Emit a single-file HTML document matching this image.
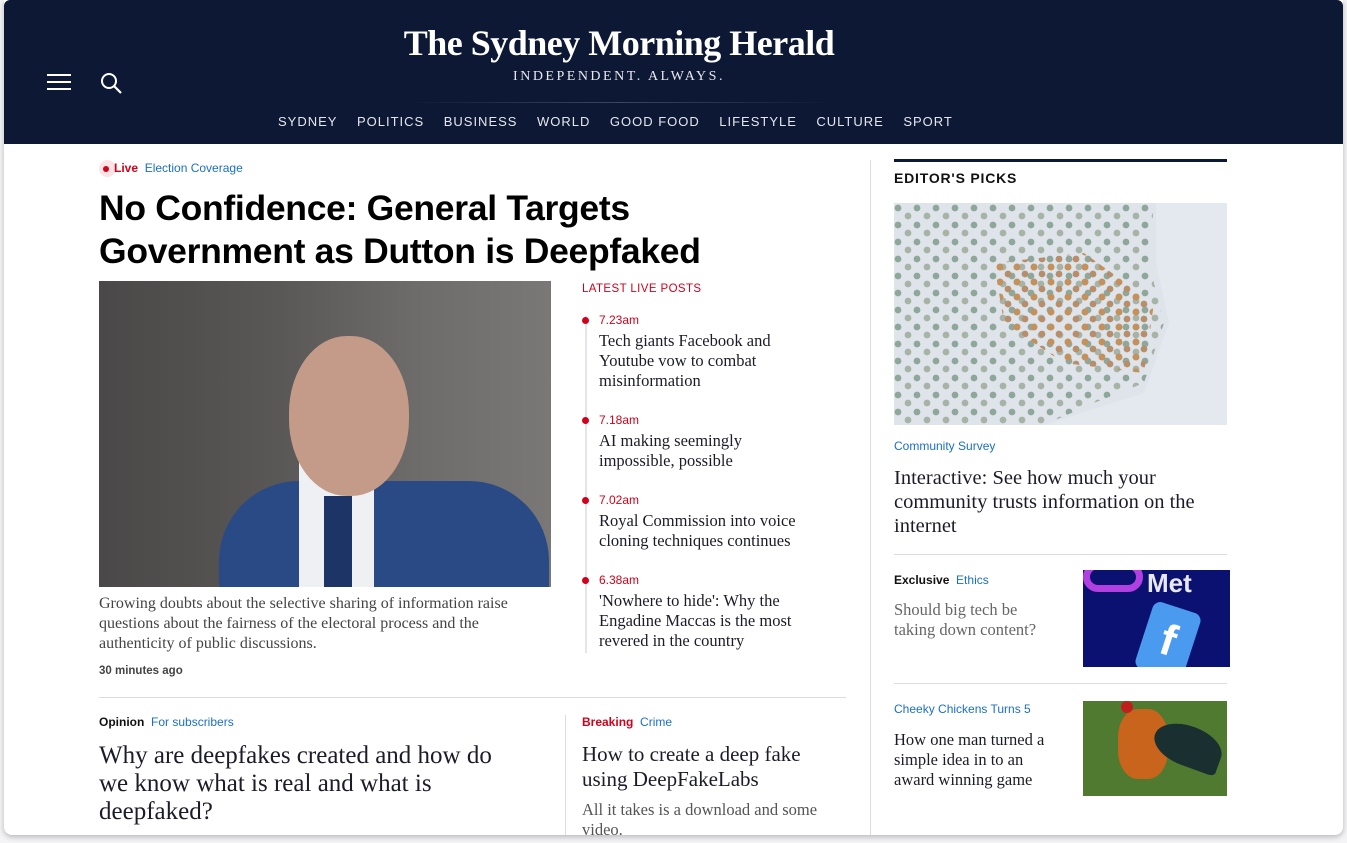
<!DOCTYPE html>
<html><head><meta charset="utf-8"><style>
*{margin:0;padding:0;box-sizing:border-box}
body{width:1347px;height:843px;background:#f4f4f6;position:relative;overflow:hidden;font-family:"Liberation Sans",sans-serif}
.card{position:absolute;left:4px;top:0;width:1339px;height:835px;background:#fff;border-radius:0 0 8px 8px;box-shadow:0 2px 6px rgba(0,0,0,.25);overflow:hidden}
.hdr{position:absolute;left:0;top:0;width:1339px;height:144px;background:#0d1934;border-radius:6px 6px 0 0}
.a{position:absolute}
.logo{top:22px;color:#fff;font-family:"Liberation Serif",serif;font-weight:bold;font-size:36px;text-align:center;letter-spacing:-0.5px}
.tag{top:69px;text-align:center;color:#e8e8ee;font-family:"Liberation Serif",serif;font-size:14px;letter-spacing:2.5px}
.nav{top:114px;left:274px;color:#e4e6ee;font-size:13px;letter-spacing:1px}
.nav span{margin-right:19.5px}
.serif{font-family:"Liberation Serif",serif;color:#1c1c28}
.red{color:#d0021b}.blue{color:#1a6fc9}
.small{font-size:12px}
.time{font-size:12px;color:#d0021b}
.dot{position:absolute;width:7px;height:7px;border-radius:50%;background:#d0021b;left:-4px}
.lp{margin-left:13px;margin-top:4px;font-size:16.5px;line-height:20px}
</style></head><body>
<div class="card">
<div class="hdr">
 <div class="a logo" style="left:200px;width:830px">The Sydney Morning Herald</div>
 <div class="a tag" style="left:200px;width:830px">INDEPENDENT. ALWAYS.</div>
 <div class="a" style="left:400px;top:102px;width:430px;height:1px;background:linear-gradient(90deg,transparent,#3a4666,transparent)"></div>
 <svg class="a" style="left:42px;top:72px" width="26" height="22"><path d="M1 3h24M1 10h24M1 17h24" stroke="#fff" stroke-width="2"/></svg>
 <svg class="a" style="left:95px;top:71px" width="26" height="26"><circle cx="10" cy="10" r="7" stroke="#fff" stroke-width="2" fill="none"/><path d="M15 15l7 7" stroke="#fff" stroke-width="2.2"/></svg>
 <div class="a nav"><span>SYDNEY</span><span>POLITICS</span><span>BUSINESS</span><span>WORLD</span><span>GOOD FOOD</span><span>LIFESTYLE</span><span>CULTURE</span><span>SPORT</span></div>
</div>

<div class="a" style="left:95px;top:160px;width:17px;height:17px;border-radius:50%;background:#fbe3e6"></div>
<div class="a" style="left:99px;top:166px;width:6px;height:6px;border-radius:50%;background:#d0021b"></div>
<div class="a small" style="left:110px;top:161px"><b class="red">Live</b> <span class="blue">&nbsp;Election Coverage</span></div>
<div class="a" style="left:95px;top:187px;font-size:35.5px;font-weight:bold;line-height:43px;color:#000;letter-spacing:-0.3px;white-space:nowrap">No Confidence: General Targets<br>Government as Dutton is Deepfaked</div>

<div class="a" style="left:95px;top:281px;width:452px;height:306px;background:linear-gradient(90deg,#4a4848,#5a5856 40%,#6e6c6a 70%,#7a7876);overflow:hidden">
 <div class="a" style="left:120px;top:200px;width:330px;height:130px;background:#2a4a86;border-radius:80px 80px 0 0"></div>
 <div class="a" style="left:200px;top:175px;width:75px;height:131px;background:#eef0f4"></div>
 <div class="a" style="left:225px;top:215px;width:28px;height:91px;background:#1c3466"></div>
 <div class="a" style="left:190px;top:55px;width:120px;height:160px;border-radius:48%;background:#c49a88"></div>
</div>
<div class="a serif" style="left:95px;top:594px;width:448px;font-size:16px;line-height:20px;color:#444">Growing doubts about the selective sharing of information raise questions about the fairness of the electoral process and the authenticity of public discussions.</div>
<div class="a" style="left:95px;top:665px;font-size:11.5px;font-weight:bold;color:#444">30 minutes ago</div>

<div class="a" style="left:578px;top:283px;font-size:11.5px;color:#d0021b;letter-spacing:.4px">LATEST LIVE POSTS</div>
<div class="a" style="left:581px;top:316px;width:2px;height:337px;background:#e4e4ea"></div>
<div class="a" style="left:582px;top:313px;width:210px">
 <div class="dot" style="top:4px"></div><div class="time" style="margin-left:13px">7.23am</div>
 <div class="serif lp">Tech giants Facebook and Youtube vow to combat misinformation</div>
</div>
<div class="a" style="left:582px;top:413px;width:210px">
 <div class="dot" style="top:4px"></div><div class="time" style="margin-left:13px">7.18am</div>
 <div class="serif lp">AI making seemingly impossible, possible</div>
</div>
<div class="a" style="left:582px;top:493px;width:240px">
 <div class="dot" style="top:4px"></div><div class="time" style="margin-left:13px">7.02am</div>
 <div class="serif lp">Royal Commission into voice cloning techniques continues</div>
</div>
<div class="a" style="left:582px;top:573px;width:240px">
 <div class="dot" style="top:4px"></div><div class="time" style="margin-left:13px">6.38am</div>
 <div class="serif lp">'Nowhere to hide': Why the Engadine Maccas is the most revered in the country</div>
</div>

<div class="a" style="left:95px;top:697px;width:747px;height:1px;background:#ddd"></div>
<div class="a" style="left:561px;top:715px;width:1px;height:125px;background:#ddd"></div>
<div class="a small" style="left:95px;top:715px"><b style="color:#111">Opinion</b> <span class="blue">&nbsp;For subscribers</span></div>
<div class="a serif" style="left:95px;top:742px;width:425px;font-size:25px;line-height:28px">Why are deepfakes created and how do we know what is real and what is deepfaked?</div>
<div class="a small" style="left:578px;top:715px"><b class="red">Breaking</b> <span class="blue">&nbsp;Crime</span></div>
<div class="a serif" style="left:578px;top:742px;width:240px;font-size:21px;line-height:25px">How to create a deep fake using DeepFakeLabs</div>
<div class="a serif" style="left:578px;top:800px;width:260px;font-size:16.5px;line-height:20px;color:#555">All it takes is a download and some video.</div>

<div class="a" style="left:866px;top:160px;width:1px;height:675px;background:#ddd"></div>
<div class="a" style="left:890px;top:159px;width:333px;height:3px;background:#0d1934"></div>
<div class="a" style="left:890px;top:170px;font-size:14px;font-weight:bold;color:#111;letter-spacing:.8px">EDITOR'S PICKS</div>
<div class="a" style="left:890px;top:203px;width:333px;height:222px;background:#dfe4ea;overflow:hidden">
 <svg width="333" height="222"><defs><pattern id="p" width="19" height="17" patternUnits="userSpaceOnUse"><circle cx="4" cy="5" r="3.4" fill="#8fa79a"/><circle cx="14" cy="13" r="3.4" fill="#a7b3a6"/></pattern><pattern id="q" width="17" height="15" patternUnits="userSpaceOnUse"><circle cx="4" cy="4" r="3.5" fill="#c4915c"/><circle cx="12" cy="11" r="3.4" fill="#b88e6a"/></pattern></defs>
 <path d="M0 0H260L255 60 270 120 250 180 200 200 150 222H0Z" fill="url(#p)"/>
 <path d="M100 60 190 50 260 100 250 170 170 160 110 120Z" fill="url(#q)"/>
 <path d="M262 0H333V222H150L250 190 275 120 262 60Z" fill="#e4e9ef"/></svg>
</div>
<div class="a small blue" style="left:890px;top:439px">Community Survey</div>
<div class="a serif" style="left:890px;top:466px;width:340px;font-size:20.5px;line-height:24px">Interactive: See how much your community trusts information on the internet</div>
<div class="a" style="left:890px;top:554px;width:333px;height:1px;background:#ddd"></div>
<div class="a small" style="left:890px;top:573px"><b style="color:#111">Exclusive</b> <span class="blue">&nbsp;Ethics</span></div>
<div class="a serif" style="left:890px;top:600px;width:165px;font-size:16.5px;line-height:20px;color:#666">Should big tech be taking down content?</div>
<div class="a" style="left:1079px;top:570px;width:147px;height:97px;background:#0a1170;overflow:hidden">
 <div class="a" style="left:0;top:-8px;width:60px;height:30px;border:7px solid #b040e0;border-radius:20px"></div>
 <div class="a" style="left:64px;top:-2px;color:#e8e8f4;font-weight:bold;font-size:26px">Met</div>
 <div class="a" style="left:60px;top:36px;width:50px;height:70px;background:#4a9af0;border-radius:8px;transform:rotate(18deg);color:#fff;font-weight:bold;font-size:44px;text-align:center;line-height:70px">f</div>
</div>
<div class="a" style="left:890px;top:683px;width:333px;height:1px;background:#ddd"></div>
<div class="a small blue" style="left:890px;top:702px">Cheeky Chickens Turns 5</div>
<div class="a serif" style="left:890px;top:730px;width:172px;font-size:16.5px;line-height:20px">How one man turned a simple idea in to an award winning game</div>
<div class="a" style="left:1079px;top:701px;width:144px;height:95px;background:#4f7a30;overflow:hidden">
 <div class="a" style="left:35px;top:8px;width:50px;height:70px;background:#c8641c;border-radius:40%"></div>
 <div class="a" style="left:70px;top:25px;width:70px;height:40px;background:#1a3030;border-radius:50% 50% 10% 50%;transform:rotate(20deg)"></div>
 <div class="a" style="left:38px;top:0;width:12px;height:12px;background:#c0201c;border-radius:50%"></div>
</div>
</div>
</body></html>
